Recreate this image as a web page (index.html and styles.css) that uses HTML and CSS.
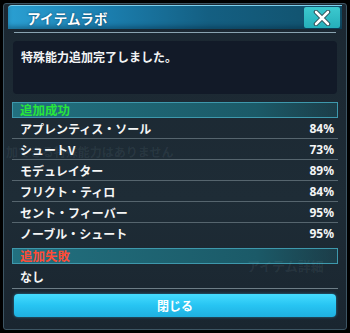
FILE: index.html
```html
<!DOCTYPE html>
<html>
<head>
  <title>アイテムラボ</title>
  <link rel="stylesheet" href="styles.css">
</head>
<body>
  <div class="window">
    <div class="ghost ghost-1">加できる特殊能力はありません</div>
    <div class="ghost ghost-2">アイテム詳細</div>

    <div class="titlebar">
      <span class="title">アイテムラボ</span>
      <div class="close-btn">
        <svg width="18" height="16" viewBox="0 0 18 16">
          <path d="M3 2 L15 14 M15 2 L3 14" stroke="#2b4850" stroke-width="4.5" stroke-linecap="round"/>
          <path d="M3 2 L15 14 M15 2 L3 14" stroke="#fff" stroke-width="2.6" stroke-linecap="round"/>
        </svg>
      </div>
    </div>
    <div class="title-line"></div>

    <div class="message">特殊能力追加完了しました。</div>

    <div class="results">
      <div class="section success">追加成功</div>
      <div class="row"><span>アプレンティス・ソール</span><span class="pct">84%</span></div>
      <div class="row"><span>シュートV</span><span class="pct">73%</span></div>
      <div class="row"><span>モデュレイター</span><span class="pct">89%</span></div>
      <div class="row"><span>フリクト・ティロ</span><span class="pct">84%</span></div>
      <div class="row"><span>セント・フィーバー</span><span class="pct">95%</span></div>
      <div class="row last"><span>ノーブル・シュート</span><span class="pct">95%</span></div>

      <div class="section failure">追加失敗</div>
      <div class="row none"><span>なし</span></div>
    </div>

    <div class="footer">
      <div class="close-main">閉じる</div>
    </div>
  </div>
</body>
</html>
```

FILE: styles.css
```css
body {
  margin: 0;
  padding: 0;
  width: 350px;
  height: 333px;
  background-color: #000;
  font-family: "Noto Sans CJK JP", "Noto Sans", sans-serif;
  overflow: hidden;
}

.window {
  position: relative;
  margin: 3px;
  height: 325px;
  border: 1px solid #3d5563;
  border-radius: 3px;
  background: linear-gradient(to bottom, #1b2731, #1e2c36 60%, #1a2630);
  overflow: hidden;
}

.ghost {
  position: absolute;
  color: rgba(200, 220, 230, 0.08);
  font-size: 12px;
  font-weight: bold;
}

.ghost-1 {
  left: 2px;
  top: 139px;
}

.ghost-2 {
  left: 243px;
  top: 252px;
  font-size: 13px;
}

.titlebar {
  display: flex;
  justify-content: space-between;
  align-items: center;
  height: 23px;
  margin: 1px 4px 0 4px;
  background: linear-gradient(to right, #2a9fd2, #1b7eae 30%, #145f82 60%, #11506a);
  border-top: 1px solid #7fd0ee;
  border-radius: 4px 0 0 0;
  box-shadow: inset 0 -3px 4px rgba(0, 30, 50, 0.35);
}

.title {
  color: #fff;
  font-size: 13.5px;
  font-weight: bold;
  padding-left: 19px;
  letter-spacing: 0.3px;
  text-shadow: 0 0 2px rgba(0, 40, 70, 0.8);
}

.close-btn {
  display: flex;
  align-items: center;
  justify-content: center;
  width: 36px;
  height: 21px;
  margin-right: 2px;
  background: linear-gradient(to bottom, #3cc9cf, #25afba);
  border-radius: 2px;
}

.title-line {
  height: 1px;
  margin: 3px 10px 0 10px;
  background-color: #8aa3b0;
}

.message {
  height: 46px;
  margin: 8px 9px 0 9px;
  padding: 7px 8px 0 8px;
  background-color: #121a28;
  border-radius: 4px;
  color: #f2f4f5;
  font-size: 12px;
  font-weight: bold;
}

.results {
  margin: 8px 8px 0 8px;
}

.section {
  height: 14px;
  line-height: 14px;
  padding-left: 7px;
  font-size: 12.5px;
  font-weight: bold;
  border: 1px solid #3e98ac;
  background: linear-gradient(to right, #22707f, #1b5a68 75%, rgba(27, 90, 104, 0.4));
}

.success {
  color: #27e63a;
}

.failure {
  color: #ff4b36;
  margin-top: 5px;
}

.row {
  display: flex;
  justify-content: space-between;
  align-items: center;
  height: 20px;
  padding: 0 4px 0 8px;
  border-bottom: 1px solid #56656e;
  color: #f4f5f5;
  font-size: 12px;
  font-weight: bold;
}

.row.last {
  border-bottom: none;
}

.row.none {
  height: 24px;
  border-bottom: 1px solid #6d7d86;
}

.pct {
  font-family: "Noto Sans", sans-serif;
  font-size: 12px;
}

.footer {
  padding: 5px 10px 0 10px;
}

.close-main {
  height: 23px;
  line-height: 23px;
  text-align: center;
  color: #fff;
  font-size: 12px;
  font-weight: bold;
  background: linear-gradient(to bottom, #45dcff, #27c4f2 50%, #1fb0e0);
  border-radius: 4px;
  box-shadow: 0 0 3px rgba(60, 200, 255, 0.5);
}
```
